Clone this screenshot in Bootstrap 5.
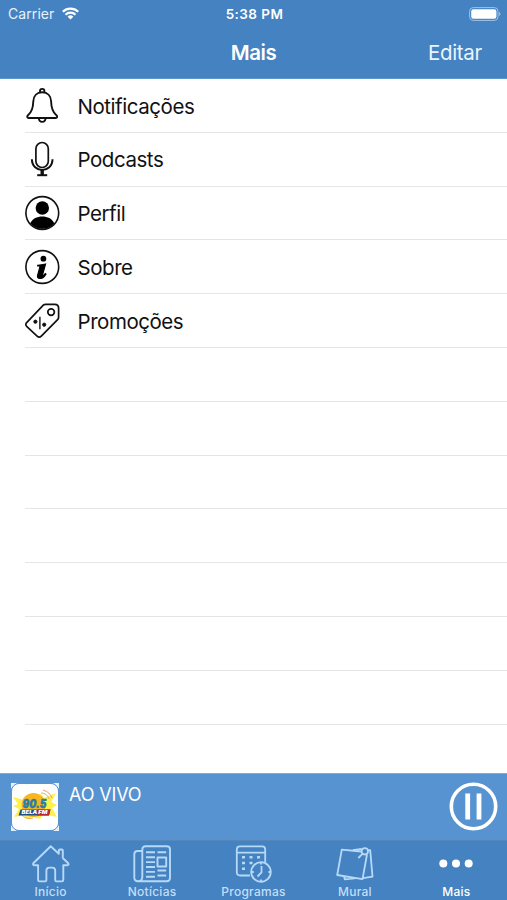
<!DOCTYPE html>
<html lang="pt-BR">
<head>
<meta charset="utf-8">
<meta name="viewport" content="width=device-width, initial-scale=1">
<title>Mais</title>
<link rel="stylesheet" href="https://cdn.jsdelivr.net/npm/bootstrap@5.3.0/dist/css/bootstrap.min.css">
<style>
body{font-family:Inter,"Liberation Sans",sans-serif;color:#111;height:900px;overflow:hidden}
svg{display:block;flex:none}
.top-area{background:#4482c1;height:79px;border-bottom:1px solid #5d96cd}
.status-line{height:27px;font-size:14px;line-height:27px;padding:0 6px 0 8px}
.side{flex:1 1 0}
.carrier{letter-spacing:.08px;color:#e6f2fc}
.clock{font-size:13.5px;font-weight:600;letter-spacing:.45px;padding-top:1px}
.title-line{height:51px;line-height:51px;padding:0 25px}
.title-text{font-size:20.5px;font-weight:600;letter-spacing:-.4px}
.edit{font-size:20.5px;letter-spacing:-.3px;color:#eaf5ff}
.menu-rows{padding-left:25px}
.menu-rows .list-group-item{height:53.8px;padding:0;border:0;border-bottom:1px solid #e5e5e7;border-radius:0;color:#111;font-size:20.5px;letter-spacing:-.45px}
.menu-rows .list-group-item:last-child{border-bottom:1px solid #e5e5e7}
.menu-rows svg{margin-right:17.5px}
.row-label{padding-top:3px}
.player{background:#5793d1;height:67px;border-top:1px solid #8aa9c8;padding:0 9px 0 10px}
.player svg{margin-top:-1px}
.live{font-size:18px;letter-spacing:-.15px;line-height:22px;padding:10px 0 0 9px}
.tabs-bar{background:#4482c1;height:60px;border-top:1px solid #5587b8}
.tabs-bar .nav-link{padding:4px 0 0;color:#c1def8;font-size:12px;font-weight:500;line-height:14px;letter-spacing:.25px}
.tabs-bar .nav-link svg{margin:0 auto 2px}
.tabs-bar .nav-link.active{color:#fff}
</style>
<script src="https://cdn.jsdelivr.net/npm/bootstrap@5.3.0/dist/js/bootstrap.bundle.min.js"></script>
</head>
<body class="bg-white d-flex flex-column">
<header class="top-area text-white flex-shrink-0">
  <div class="status-line d-flex align-items-center">
    <div class="side d-flex align-items-center">
      <span class="carrier">Carrier</span>
      <svg class="ms-2" width="17" height="13" viewBox="0 0 17 13" fill="none" stroke="#fff" stroke-width="2.2"><path d="M.8 4.7a11 11 0 0 1 15.4 0M3.5 7.7a7.1 7.1 0 0 1 10 0"/><path d="M8.5 12.6 5.6 9.7a4.1 4.1 0 0 1 5.8 0z" fill="#fff" stroke="none"/></svg>
    </div>
    <span class="clock">5:38 PM</span>
    <div class="side d-flex justify-content-end">
      <svg width="32" height="14" viewBox="0 0 32 14"><rect x=".6" y=".6" width="28.4" height="12.8" rx="3.6" fill="none" stroke="#9fc3e6"/><rect x="2.2" y="2.2" width="25.2" height="9.6" rx="2.2" fill="#fff"/><path d="M30.2 5v4q1.3-.7 1.3-2t-1.3-2z" fill="#9fc3e6"/></svg>
    </div>
  </div>
  <div class="title-line d-flex">
    <span class="side"></span><span class="title-text">Mais</span><span class="side text-end edit">Editar</span>
  </div>
</header>
<main class="flex-grow-1 overflow-hidden">
  <div class="list-group list-group-flush menu-rows">
    <a class="list-group-item d-flex align-items-center" href="#">
      <svg width="35" height="36" viewBox="0 0 35 36" fill="none" stroke="#111" stroke-width="1.9" stroke-linejoin="round"><path d="M15 5.3V4.1a2.2 2.2 0 0 1 4.4 0v1.200M17.200 5.300c-5.500 0-8.700 3.700-8.900 9-.2 8.500-2.200 11.500-5.300 14-1.300 1.200-1 2.700.8 2.700h26.800c1.800 0 2.100-1.500.8-2.700-3.100-2.500-5.100-5.500-5.300-14-.2-5.300-3.400-9-8.900-9zM13.800 31c.2 5.200 6.600 5.200 6.800 0"/></svg><span class="row-label">Notificações</span></a>
    <a class="list-group-item d-flex align-items-center" href="#">
      <svg width="35" height="36" viewBox="0 0 35 36" fill="none" stroke="#111" stroke-width="1.7"><rect x="10.900" y="1.500" width="12.400" height="25" rx="6.200"/><path d="M6.900 18.300c0 14.200 20.600 14.200 20.600 0" stroke-width="2"/><path d="M17.200 29v5" stroke-width="3.400"/><path d="M12.200 34.200h10" stroke-width="2"/></svg><span class="row-label">Podcasts</span></a>
    <a class="list-group-item d-flex align-items-center" href="#">
      <svg width="35" height="36" viewBox="0 0 35 36"><circle cx="17.300" cy="18" r="16.400" fill="#fff" stroke="#111" stroke-width="1.600"/><circle cx="17.300" cy="13" r="6.700"/><path d="M5.200 28.300c2.500-4.800 6.800-6.800 12.100-6.800s9.600 2 12.100 6.800a16 16 0 0 1-24.200 0z"/></svg><span class="row-label">Perfil</span></a>
    <a class="list-group-item d-flex align-items-center" href="#">
      <svg width="35" height="36" viewBox="0 0 35 36"><circle cx="17.300" cy="18" r="16.400" fill="none" stroke="#111" stroke-width="1.600"/><circle cx="18.400" cy="9.700" r="2.900"/><path stroke="#000" stroke-width="1.100" d="M12.700 16.200q3.800-.4 7.900-1.200l-3.100 11q-.2.900.5.700.9-.3 2.200-2.100l.8.500c-1.900 3.200-3.800 4.400-6 4.400-2.100 0-3-1.300-2.400-3.400l2.300-8.300q.2-.8-.7-.8h-1.500z"/></svg><span class="row-label">Sobre</span></a>
    <a class="list-group-item d-flex align-items-center" href="#">
      <svg width="35" height="36" viewBox="0 0 35 36" fill="none" stroke="#111" stroke-width="1.700" stroke-linejoin="round"><path d="M18.300 2.200q1-.9 2.300-.9h9.200q3.800 0 3.800 3.800v9.100q0 1.500-1 2.500L16.300 33.100q-2 2-4.200 0L1.900 23.600q-2.200-2.100 0-4.300z"/><circle cx="26.100" cy="9.100" r="3.300"/><path d="M14.900 13.700v12.600" stroke-width="1.400"/><circle cx="10.400" cy="18.700" r="1.600" fill="#111" stroke-width="1"/><circle cx="19.200" cy="21.700" r="1.600" fill="#111" stroke-width="1"/></svg><span class="row-label">Promoções</span></a>
    <div class="list-group-item"></div><div class="list-group-item"></div><div class="list-group-item"></div><div class="list-group-item"></div><div class="list-group-item"></div><div class="list-group-item"></div><div class="list-group-item"></div>
  </div>
</main>
<section class="player d-flex text-white flex-shrink-0">
  <svg class="align-self-center" width="50" height="50" viewBox="0 0 50 50">
    <path d="M1 1h6L1 7zM43 1h6v6zM49 43v6h-6zM7 49H1v-6z" fill="#e4f1fb"/>
    <rect x="1.500" y="1.500" width="47" height="47" rx="7.500" fill="#fff" stroke="#5793d1" stroke-width="1"/>
    <path d="m3 15 12 3 2-5 5 2 9-3 3 4 12-5-5 9 6 3-5 3 5 9-13-3-4 5-7-2-7 2-2-4-10 2 5-8-6-3 5-2z" fill="#fff04a"/>
    <circle cx="23.500" cy="23" r="12" fill="#f8b51d"/>
    <path d="M31 11q6 0 8 6M33 8q7 2 9 8M12 33q5 5 11 3" fill="none" stroke="#f4a35e"/>
    <text x="12.500" y="26" textLength="24" lengthAdjust="spacingAndGlyphs" font-size="12" font-weight="900" font-style="italic" letter-spacing="0" fill="#287eac" stroke="#287eac" stroke-width=".4">90.5</text>
    <path d="M10.500 27.500h30l-1.500 6H8.500z" fill="#234f85"/><path d="M28 27.500h12.500l-1.500 6H27z" fill="#bb2932"/>
    <text x="11.500" y="32.300" textLength="26" lengthAdjust="spacingAndGlyphs" font-size="4.800" font-weight="900" font-style="italic" fill="#fff">BELA FM</text>
  </svg>
  <div class="live flex-grow-1">AO VIVO</div>
  <svg class="align-self-center" width="49" height="49" viewBox="0 0 49 49" fill="none" stroke="#fff"><circle cx="24.500" cy="24.500" r="22.200" stroke-width="3.600"/><path d="M18.700 11.500v26M30 11.500v26" stroke-width="4.800"/></svg>
</section>
<nav class="tabs-bar nav nav-justified flex-nowrap flex-shrink-0">
  <a class="nav-link" href="#"><svg width="38" height="38" viewBox="0 0 38 38" fill="none" stroke="#b6d9f8" stroke-width="1.900" stroke-linejoin="round"><path d="M18.700 1.200 1.300 18.300q-.8 1.900 1.300 2h3.500V35q0 1.400 1.400 1.400h5.700q1.200 0 1.200-1.300v-9.500q0-3 3-3h2.800q3 0 3 3v9.500q0 1.300 1.200 1.300h5.500q1.400 0 1.400-1.400V20.300h3.900q2-.2 1-2L30.800 13V5.500q0-1-1-1h-2q-1 0-1 1v3.200z"/></svg>Início</a>
  <a class="nav-link" href="#"><svg width="38" height="38" viewBox="0 0 38 38" fill="none" stroke="#b6d9f8" stroke-width="1.900" stroke-linejoin="round"><path d="M9.300 32V4.500q0-3.200 3.200-3.200h21.300q3.200 0 3.200 3.200V33q0 3.200-3.200 3.200H5q-3.700 0-3.700-3.700V9.300q0-3.300 3.300-3.300h4.700M9.300 32q0 4.200-4.300 4.200"/><path d="M13 7.300h9M24.500 7.300h8.700M13 12.200h9M13 17.100h9M13 22h9M24.500 25.500h8.700M13 26.900h9M24.500 30.500h8.700M13 31.800h9M24.500 12.500h8.700v9h-8.700z"/></svg>Notícias</a>
  <a class="nav-link" href="#"><svg width="38" height="38" viewBox="0 0 38 38" fill="none" stroke="#b6d9f8" stroke-width="1.800"><path d="M15 30.500H5.300q-3.500 0-3.500-3.500V4.300q0-3 3-3h22.400q3 0 3 3v13M2 7.600h28"/><path d="M7 12.300h3M14.500 12.300h3M22 12.300h3M7 18h3M14.500 18h3M7 23.700h3" stroke-width="2.400"/><circle cx="26" cy="27" r="9.800"/><path d="M26.500 21v6.500l-4 4M26 17.600v2M26 34.500v2M16.800 27h2M33.400 27h2"/></svg>Programas</a>
  <a class="nav-link" href="#"><svg width="38" height="38" viewBox="0 0 38 38" fill="none" stroke="#b6d9f8" stroke-width="1.800" stroke-linejoin="round"><path d="M25 6.500 5.800 4.600 1.200 30 26.500 34.200 31 9.500M8 31.200l.8 3.200 10-1M27 33.200l9.500-1.500L34.200 5.200l-2.800.3M17 5.200l8.500-1.200"/><circle cx="28.800" cy="6.300" r="3.200"/><path d="M26.500 8.800l-4.200 4.200"/></svg>Mural</a>
  <a class="nav-link active" href="#"><svg width="38" height="38" viewBox="0 0 38 38" fill="#fff"><circle cx="6.300" cy="18.500" r="4"/><circle cx="19" cy="18.500" r="4"/><circle cx="31.700" cy="18.500" r="4"/></svg>Mais</a>
</nav>
</body>
</html>
